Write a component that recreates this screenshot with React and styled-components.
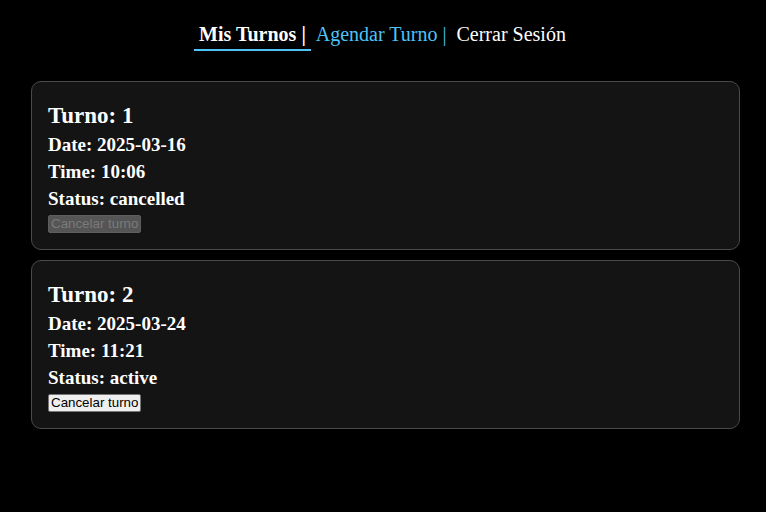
import React from 'react';
import styled, { createGlobalStyle } from 'styled-components';

const GlobalStyle = createGlobalStyle`
  html, body {
    margin: 0;
    padding: 0;
    background: #000;
  }
  body {
    font-family: "Liberation Serif", "Times New Roman", serif;
    color: #fff;
  }
`;

const StyledPage = styled.div`
  min-height: 512px;
  background: #000;
  padding: 0 26px 0 31px;
  box-sizing: border-box;
`;

const StyledNav = styled.nav`
  display: flex;
  justify-content: center;
  align-items: flex-start;
  padding: 21px 6px 0 0;
  height: 81px;
  box-sizing: border-box;
`;

const StyledNavLink = styled.a`
  font-family: "Liberation Serif", serif;
  font-size: 20px;
  line-height: 26px;
  padding: 0 5px 2px;
  text-decoration: none;
  white-space: pre;
  cursor: pointer;
  color: ${({ $color }) => $color};
  font-weight: ${({ $active }) => ($active ? 700 : 400)};
  border-bottom: 2px solid ${({ $active }) => ($active ? '#4fc3f7' : 'transparent')};
`;

const StyledList = styled.div`
  display: flex;
  flex-direction: column;
  gap: 10px;
`;

const StyledCard = styled.div`
  display: flex;
  flex-direction: column;
  align-items: flex-start;
  width: 709px;
  box-sizing: border-box;
  background: #141414;
  border: 1px solid #4a4a4a;
  border-radius: 10px;
  padding: 19px 16px 16px;
`;

const StyledTitle = styled.h2`
  margin: 0;
  font-size: 23px;
  line-height: 30px;
  font-weight: 700;
`;

const StyledField = styled.p`
  margin: 0;
  font-size: 19px;
  line-height: 27px;
  font-weight: 700;
`;

const StyledButton = styled.button`
  margin-top: 3px;
  height: 18px;
  box-sizing: border-box;
  padding: 0 2px;
  font-family: "Liberation Sans", Arial, sans-serif;
  font-size: 13.33px;
  line-height: 16px;
  border-radius: 2px;
  border: 1px solid ${({ disabled }) => (disabled ? '#5e5e5e' : '#767676')};
  background: ${({ disabled }) => (disabled ? '#555555' : '#efefef')};
  color: ${({ disabled }) => (disabled ? '#7a7a7a' : '#000')};
`;

const turnos = [
  { id: 1, date: '2025-03-16', time: '10:06', status: 'cancelled' },
  { id: 2, date: '2025-03-24', time: '11:21', status: 'active' },
];

const App = () => (
  <StyledPage>
    <GlobalStyle />
    <StyledNav>
      <StyledNavLink $active $color="#fff">Mis Turnos |</StyledNavLink>
      <StyledNavLink $color="#4fc3f7">Agendar Turno |</StyledNavLink>
      <StyledNavLink $color="#fff">Cerrar Sesión</StyledNavLink>
    </StyledNav>
    <StyledList>
      {turnos.map((t) => (
        <StyledCard key={t.id}>
          <StyledTitle>Turno: {t.id}</StyledTitle>
          <StyledField>Date: {t.date}</StyledField>
          <StyledField>Time: {t.time}</StyledField>
          <StyledField>Status: {t.status}</StyledField>
          <StyledButton disabled={t.status === 'cancelled'}>Cancelar turno</StyledButton>
        </StyledCard>
      ))}
    </StyledList>
  </StyledPage>
);

export default App;
